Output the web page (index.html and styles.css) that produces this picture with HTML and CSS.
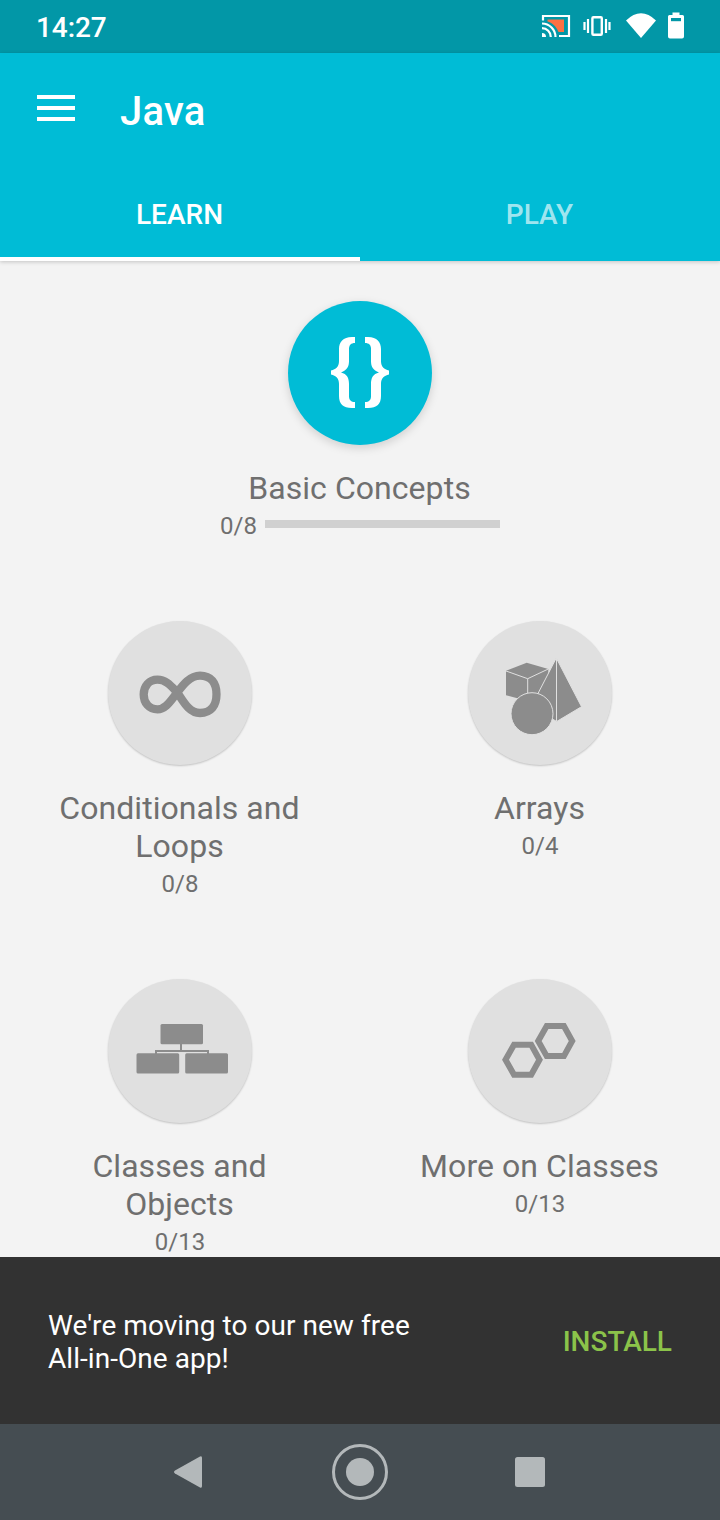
FILE: index.html
```html
<!DOCTYPE html>
<html lang="en">
<head>
    <meta charset="UTF-8">
    <meta name="viewport" content="width=device-width, initial-scale=1.0">
    <title>Java</title>
    <link rel="stylesheet" href="styles.css">
</head>
<body>
    <div class="status-bar">
        <span class="clock">14:27</span>
        <svg class="status-icons" width="150" height="33" viewBox="0 0 150 33">
            <!-- cast -->
            <path d="M11.500 9.500H28V22H22.500C20 16 16 12.500 11.500 11.500z" fill="#ff7043"/>
            <path d="M7 10.500V6h26v20H23" fill="none" stroke="#fff" stroke-width="2.200"/>
            <path d="M6 13.500a13.500 13.500 0 0 1 13.500 13.500M6 18.200a8.800 8.800 0 0 1 8.800 8.800" fill="none" stroke="#fff" stroke-width="2.200"/>
            <path d="M6 23a4 4 0 0 1 4 4H6z" fill="#fff"/>
            <!-- vibrate -->
            <rect x="56.400" y="7.200" width="9.400" height="17.600" rx="1" fill="none" stroke="#fff" stroke-width="2.400"/>
            <path d="M52 9v14M70 9v14M48.500 12v8M73.500 12v8" stroke="#fff" stroke-width="2.200"/>
            <!-- wifi -->
            <path d="M90 10.500Q105 -4 120 10.500L105 28z" fill="#fff"/>
            <!-- battery -->
            <path d="M136.500 2.500h7v2.500h3q1.500 0 1.500 1.500v20q0 2-2 2h-12q-2 0-2-2V6.500q0-1.500 1.500-1.500h3z" fill="#fff"/>
            <path d="M135 8h10v3.200h-10z" fill="#0297a7"/>
        </svg>
    </div>

    <div class="app-bar">
        <div class="toolbar">
            <div class="menu"><span></span><span></span><span></span></div>
            <h1>Java</h1>
        </div>
        <div class="tabs">
            <div class="tab active">LEARN</div>
            <div class="tab">PLAY</div>
        </div>
    </div>

    <div class="content">
        <div class="module first">
            <svg class="circle current" viewBox="0 0 144 144">
                <g fill="#fff">
                    <path id="brace" d="M67 36H64C55 36 51 41 51 48V60C51 66 48 68 43 69.500V73.500C48 75 51 77 51 83V95C51 103 55 107 64 107H67V101C63 101 61 99 61 95V83C61 77 59 73 53 71.500C59 69 61 66 61 60V48C61 44 63 42 67 42Z"/>
                    <use href="#brace" transform="matrix(-1 0 0 1 144 0)"/>
                </g>
            </svg>
            <div class="title">Basic Concepts</div>
            <div class="progress">
                <span class="count">0/8</span>
                <div class="bar"></div>
            </div>
        </div>

        <div class="row">
            <div class="module">
                <svg class="circle" viewBox="0 0 144 144">
                    <path d="M69.300 71.500C63 65 58 58.700 49.500 58.700C41 58.700 35.700 65 35.700 73.500S41 88.300 49.500 88.300C58 88.300 63 79 69.300 71.500C75 64 82 54.700 92 54.700C103 54.700 108.500 62 108.500 73.300S103 92 92 92C81 92 75 80 69.300 71.500Z" fill="none" stroke="#8c8c8c" stroke-width="8.300"/>
                </svg>
                <div class="title">Conditionals and Loops</div>
                <div class="count">0/8</div>
            </div>
            <div class="module">
                <svg class="circle" viewBox="0 0 144 144">
                    <g fill="#8c8c8c" stroke="#e0e0e0">
                        <path d="M38 49.700L58.700 41.700L80.300 48V70L59.700 80L38 74.300Z" stroke="none"/>
                        <path d="M38 50L59.700 57.700L80.300 48M59.700 57.700V80" fill="none"/>
                        <path d="M88.300 37L63 86L88.700 100.500L113.500 85.700Z"/>
                        <path d="M88.500 38V100"/>
                        <circle cx="64" cy="92.700" r="21"/>
                    </g>
                </svg>
                <div class="title">Arrays</div>
                <div class="count">0/4</div>
            </div>
        </div>

        <div class="row">
            <div class="module">
                <svg class="circle" viewBox="0 0 144 144">
                    <g fill="#8c8c8c">
                        <rect x="52.500" y="45" width="42.500" height="20.300" rx="1.500"/>
                        <rect x="28.500" y="74.300" width="42.700" height="20.300" rx="1.500"/>
                        <rect x="77.200" y="74.300" width="42.800" height="20.300" rx="1.500"/>
                    </g>
                    <path d="M73 64v8M48 75v-3h52v3" fill="none" stroke="#8c8c8c" stroke-width="2"/>
                </svg>
                <div class="title">Classes and Objects</div>
                <div class="count">0/13</div>
            </div>
            <div class="module">
                <svg class="circle" viewBox="0 0 144 144">
                    <g fill="none" stroke="#8c8c8c" stroke-width="6">
                        <path d="M37.500 80.700L46 65.800H63.200L71.500 80.700L63.200 95.800H46Z"/>
                        <path d="M70.200 62L78.700 47.100H95.900L104.200 62L95.900 77.100H78.700Z"/>
                    </g>
                </svg>
                <div class="title">More on Classes</div>
                <div class="count">0/13</div>
            </div>
        </div>
    </div>

    <div class="snackbar">
        <p>We're moving to our new free All-in-One app!</p>
        <span class="install">INSTALL</span>
    </div>

    <div class="nav-bar">
        <svg width="720" height="96" viewBox="0 0 720 96" fill="#b3b8ba">
            <path d="M175 46.500L200 32.500Q202 31.500 202 34V62Q202 64.500 200 63.500L175 49.500Q173 48 175 46.500Z"/>
            <circle cx="360" cy="48" r="14"/>
            <circle cx="360" cy="48" r="26.500" fill="none" stroke="#b3b8ba" stroke-width="3"/>
            <rect x="515" y="33" width="30" height="30" rx="2.500"/>
        </svg>
    </div>
</body>
</html>
```

FILE: styles.css
```css
* {
    box-sizing: border-box;
}
body {
    margin: 0;
    width: 720px;
    height: 1520px;
    display: flex;
    flex-direction: column;
    overflow: hidden;
    font-family: Roboto, sans-serif;
    background-color: #f3f3f3;
    color: #6f6f6f;
}
svg {
    display: block;
}
.status-bar {
    flex: none;
    height: 53px;
    padding: 0 34px 0 36px;
    display: flex;
    align-items: center;
    justify-content: space-between;
    background-color: #0297a7;
    color: #fff;
}
.clock {
    padding-top: 2px;
    font-size: 28px;
    font-weight: 500;
    letter-spacing: -0.1px;
}
.app-bar {
    flex: none;
    height: 208px;
    background-color: #00bcd6;
    color: #fff;
    box-shadow: 0 1px 4px rgba(0,0,0,0.2);
}
.toolbar {
    height: 112px;
    padding-left: 37px;
    display: flex;
    align-items: center;
}
.menu {
    width: 38px;
    margin-bottom: 3px;
    display: grid;
    gap: 7px;
}
.menu span {
    height: 4px;
    background-color: #fff;
}
h1 {
    margin: 5px 0 0 45px;
    font-size: 40px;
    font-weight: 500;
    line-height: 48px;
    letter-spacing: 0.2px;
}
.tabs {
    display: flex;
    height: 96px;
}
.tab {
    flex: 1;
    padding: 33px 1px 0 0;
    text-align: center;
    font-size: 28px;
    font-weight: 500;
    line-height: 33px;
    color: rgba(255,255,255,0.65);
}
.tab.active {
    color: #fff;
    border-bottom: 4px solid #fff;
}
.content {
    flex: 1;
    min-height: 0;
    overflow: hidden;
    padding-top: 40px;
}
.row {
    display: flex;
    height: 358px;
}
.module {
    width: 360px;
    display: flex;
    flex-direction: column;
    align-items: center;
    text-align: center;
}
.module.first {
    height: 320px;
    margin: 0 auto;
}
.circle {
    flex: none;
    width: 144px;
    height: 144px;
    margin-bottom: 24px;
    border-radius: 50%;
    background-color: #e0e0e0;
    box-shadow: 0 1px 2px rgba(0,0,0,0.2);
}
.circle.current {
    background-color: #00bcd6;
    box-shadow: 0 3px 10px rgba(0,0,0,0.15);
}
.title {
    max-width: 280px;
    padding-right: 1px;
    font-size: 32px;
    line-height: 38px;
    letter-spacing: 0.05px;
}
.count {
    font-size: 24px;
    line-height: 38px;
}
.progress {
    width: 280px;
    height: 36px;
    display: flex;
    align-items: flex-start;
}
.bar {
    flex: 1;
    height: 8px;
    margin: 13px 0 0 8px;
    background-color: #d0d0d0;
}
.snackbar {
    flex: none;
    height: 167px;
    padding: 2px 48px 0;
    display: flex;
    align-items: center;
    justify-content: space-between;
    background-color: #323232;
    color: #fff;
}
.snackbar p {
    width: 400px;
    margin: 0;
    font-size: 28px;
    line-height: 33px;
    letter-spacing: 0.05px;
}
.install {
    font-size: 28px;
    font-weight: 500;
    color: #8bc34a;
}
.nav-bar {
    flex: none;
    height: 96px;
    background-color: #454d52;
}
```
